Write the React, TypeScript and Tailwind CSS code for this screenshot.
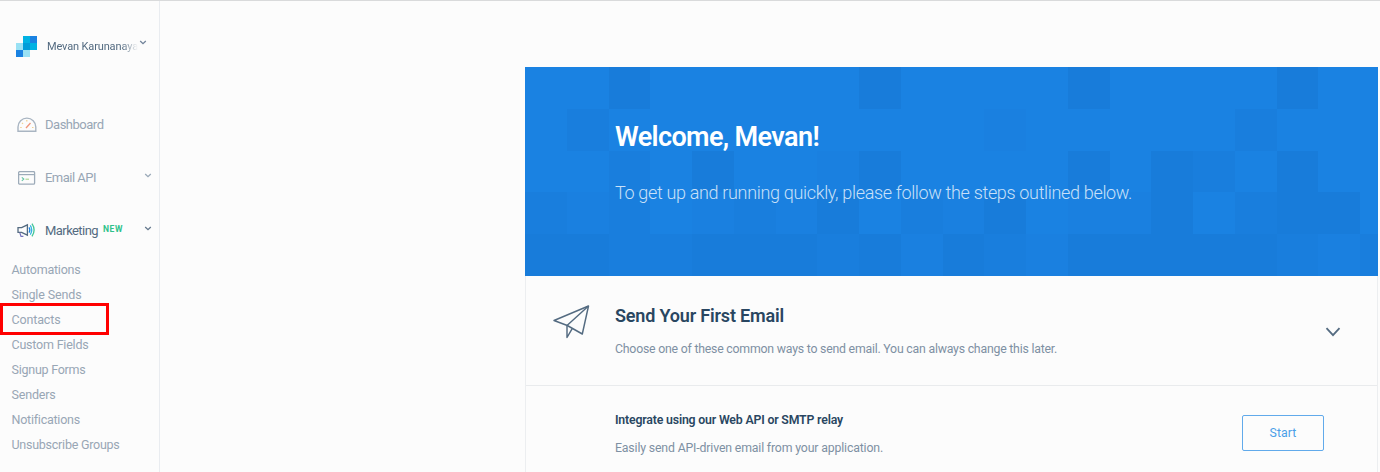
import React from 'react';

const tileRows = [
  '003000003000030000300',
  '020000000001000002000',
  '002030013000030320300',
  '212012130213011302330',
  '332233323132133333212',
];
const tileFill = ['#1a82e2', '#1a80e0', '#197edd', '#187cda'];

/* A single line of text fitted to a fixed advance width. */
function Line({ w, className, children }: { w: number; className: string; children: string }) {
  const ref = React.useRef<HTMLSpanElement>(null);
  const [spacing, setSpacing] = React.useState(0);
  React.useLayoutEffect(() => {
    const el = ref.current;
    if (el) setSpacing((w - el.getBoundingClientRect().width) / children.length);
  }, []);
  return (
    <div className={`whitespace-nowrap ${className}`}>
      <span ref={ref} style={{ letterSpacing: spacing }}>{children}</span>
    </div>
  );
}

function Chevron({ className }: { className: string }) {
  return (
    <svg viewBox="0 0 8 5" className={className} fill="none" stroke="currentColor">
      <path d="M1.2 1 4 3.7 6.8 1" strokeWidth="1.3" />
    </svg>
  );
}

function Logo() {
  return (
    <svg viewBox="0 0 21 21" className="ml-4 h-[21px] w-[21px] shrink-0" shapeRendering="crispEdges">
      <path d="M7 0h7v7H7z" fill="#00b2e3" />
      <path d="M14 0h7v7h-7z" fill="#1a82e2" />
      <path d="M0 7h7v7H0zM7 14h7v7H7z" fill="#99e1f4" />
      <path d="M7 7h7v7H7z" fill="#009dd9" />
      <path d="M14 7h7v7h-7z" fill="#00b2e3" />
      <path d="M0 14h7v7H0z" fill="#1a82e2" />
    </svg>
  );
}

function GaugeIcon() {
  return (
    <svg viewBox="0 0 20 16" className="ml-[17px] h-4 w-5 shrink-0" fill="none">
      <path d="M1 14.3V10a8.8 8.8 0 0 1 17.8 0v4.3Z" stroke="#a9b5c2" strokeWidth="1.4" />
      <path d="m9 11 4.5-5" stroke="#f0967a" strokeWidth="1.3" />
      <path d="M3.2 10.5h1.5M5 5.8l1 1M9.8 3v1.5M15 10.5h1.5" stroke="#f3d08f" strokeWidth="1.2" />
    </svg>
  );
}

function TerminalIcon() {
  return (
    <svg viewBox="0 0 18 14" className="ml-[18px] h-[14px] w-[18px] shrink-0" fill="none">
      <rect x=".6" y=".6" width="16" height="12.6" rx="1.2" stroke="#9dabb9" strokeWidth="1.3" />
      <path d="M.6 3.6h16" stroke="#9dabb9" strokeWidth="1.2" />
      <path d="m3.8 6.3 2 1.8-2 1.8" stroke="#63c4a4" strokeWidth="1.1" />
      <path d="M7.5 8.2H11" stroke="#a8d48c" strokeWidth="1.1" />
    </svg>
  );
}

function MegaphoneIcon() {
  return (
    <svg viewBox="0 0 19 15" className="ml-[17px] h-[15px] w-[19px] shrink-0" fill="none">
      <path d="M1 4.6h3.6L10.4 1.8v10.4L4.6 9.3H1Z" stroke="#546b81" strokeWidth="1.3" />
      <path d="m2.8 9.6 1.2 3.8h2.4" stroke="#7472bd" strokeWidth="1.2" />
      <path d="M12 4.3q1.8 2.7 0 5.4" stroke="#1a82e2" strokeWidth="1.2" />
      <path d="M13.3 2.4q2.9 4.6 0 9.2" stroke="#32b5e2" strokeWidth="1.3" />
      <path d="M15 .6q4.2 6.4 0 12.8" stroke="#43c696" strokeWidth="1.3" />
    </svg>
  );
}

function PlaneIcon() {
  return (
    <svg viewBox="0 0 37 34" className="h-[34px] w-[37px]" fill="none" stroke="#546b81" strokeWidth="1.45" strokeLinejoin="round">
      <path d="M1 15.5 35.5 1l-6.2 28L14.3 20.5Z" />
      <path d="M35.5 1 14 20.5v12l5.2-8.9" />
    </svg>
  );
}

function NavRow({ icon, label, w, tone, badge, chevron }: { icon: React.ReactNode; label: string; w: number; tone: string; badge?: boolean; chevron?: string }) {
  return (
    <div className="flex h-[53px] items-center">
      <div className="w-[45px]">{icon}</div>
      <Line w={w} className={`text-[13px] leading-5 ${tone}`}>{label}</Line>
      {badge && <Line w={20} className="mb-1 ml-[5px] text-[8.5px] leading-3 font-bold text-[#2fc28b]">NEW</Line>}
      {chevron && <Chevron className={`mr-[7.5px] mb-1 ml-auto h-[5px] w-2 ${chevron}`} />}
    </div>
  );
}

const links: [string, number][] = [
  ['Automations', 69], ['Single Sends', 70], ['Contacts', 49], ['Custom Fields', 77],
  ['Signup Forms', 74], ['Senders', 44], ['Notifications', 68], ['Unsubscribe Groups', 108],
];

function Sidebar() {
  return (
    <aside className="w-[160px] shrink-0 border-r border-[#e9ecf0]">
      <div className="flex h-[61px] items-end pb-[5px]">
        <Logo />
        <div className="ml-2.5 w-[91px] overflow-hidden [mask-image:linear-gradient(to_right,black_82%,transparent)]">
          <Line w={91} className="text-[11px] leading-[21px] text-[#546b81]">Mevan Karunanaya</Line>
        </div>
        <Chevron className="mb-3 ml-px h-[5px] w-2 text-[#71839a]" />
      </div>
      <nav className="pt-9 pb-px">
        <NavRow icon={<GaugeIcon />} label="Dashboard" w={58.5} tone="text-[#98a6b5]" />
        <NavRow icon={<TerminalIcon />} label="Email API" w={51} tone="text-[#98a6b5]" chevron="text-[#9aa9b8]" />
        <NavRow icon={<MegaphoneIcon />} label="Marketing" w={53} tone="text-[#546b81]" badge chevron="text-[#64788d]" />
      </nav>
      <ul className="relative">
        {links.map(([label, w]) => (
          <li key={label} className="flex h-[24.9px] items-center pl-[11.5px]">
            <Line w={w} className="text-[12.5px] leading-5 text-[#98a6b5]">{label}</Line>
          </li>
        ))}
        <li aria-hidden className="absolute top-[45px] left-0 h-8 w-[109px] border-[3px] border-[#ff0000]" />
      </ul>
    </aside>
  );
}

function Banner() {
  return (
    <header className="relative h-[209px] overflow-hidden bg-[#1a82e2] text-white">
      <svg viewBox="0 0 853 209" className="absolute inset-0 h-[209px] w-[853px]">
        {tileRows.map((row, r) => [...row].map((v, c) => (
          <rect key={`${r}-${c}`} x={c * 41.75} y={r * 41.75} width="41.75" height="41.75" fill={tileFill[Number(v)]} shapeRendering="crispEdges" />
        )))}
      </svg>
      <div className="relative pt-[52px] pl-[90px]">
        <Line w={204} className="text-[27px] leading-9 font-semibold">Welcome, Mevan!</Line>
        <Line w={517} className="mt-6 text-[18px] leading-7 font-light text-[#c9e0f8]">To get up and running quickly, please follow the steps outlined below.</Line>
      </div>
    </header>
  );
}

export default function App() {
  return (
    <div className="flex h-[472px] w-[1380px] overflow-hidden border-t border-[#d9dadb] bg-[#fcfcfc] font-[Roboto,sans-serif]">
      <Sidebar />
      <main className="ml-[365px] w-[853px] pt-[66px]">
        <Banner />
        <section className="h-[197px] border-x border-[#eceef0]">
          <div className="flex h-[110px] border-b border-[#e9ebed]">
            <div className="w-[89px] pt-[29px] pl-[27px]"><PlaneIcon /></div>
            <div className="flex-1 pt-[28px]">
              <Line w={169} className="text-[18px] leading-6 font-semibold text-[#294661]">Send Your First Email</Line>
              <Line w={442} className="mt-[11px] text-[12.3px] leading-5 text-[#7e90a3]">Choose one of these common ways to send email. You can always change this later.</Line>
            </div>
            <svg viewBox="0 0 16 10" className="mt-[51px] mr-9 h-2.5 w-4" fill="none" stroke="#546b81" strokeWidth="1.8"><path d="m1.5 1.2 6.5 7 6.5-7" /></svg>
          </div>
          <div className="flex pt-[24px]">
            <div className="flex-1 pl-[89px]">
              <Line w={228} className="text-[12.3px] leading-5 font-semibold text-[#294661]">Integrate using our Web API or SMTP relay</Line>
              <Line w={268} className="mt-[8px] text-[12.3px] leading-5 text-[#7e90a3]">Easily send API-driven email from your application.</Line>
            </div>
            <button className="mt-[5px] mr-[53px] flex h-9 w-[82px] items-center justify-center rounded-[2px] border border-[#61aaeb]">
              <Line w={27} className="text-[12.3px] leading-5 text-[#4b9fe8]">Start</Line>
            </button>
          </div>
        </section>
      </main>
    </div>
  );
}
